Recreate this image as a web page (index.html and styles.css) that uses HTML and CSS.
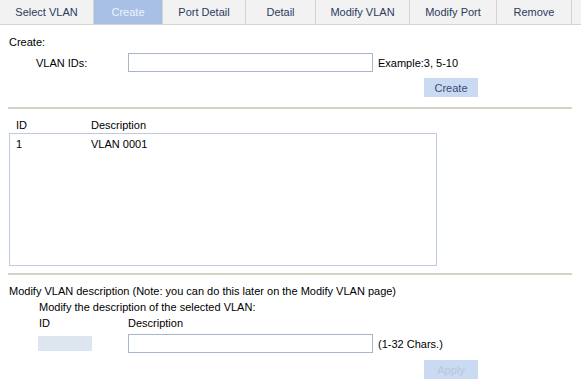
FILE: index.html
```html
<!DOCTYPE html>
<html lang="en">
<head>
    <meta charset="UTF-8">
    <title>VLAN Create</title>
    <link rel="stylesheet" href="styles.css">
</head>
<body>
    <div class="tabs">
        <div class="tab t1">Select VLAN</div>
        <div class="tab t2 active">Create</div>
        <div class="tab t3">Port Detail</div>
        <div class="tab t4">Detail</div>
        <div class="tab t5">Modify VLAN</div>
        <div class="tab t6">Modify Port</div>
        <div class="tab t7">Remove</div>
        <div class="tab t8"></div>
    </div>

    <div class="section create">
        <p class="title">Create:</p>
        <div class="row">
            <span class="label">VLAN IDs:</span>
            <input class="field" type="text">
            <span class="hint">Example:3, 5-10</span>
        </div>
        <div class="actions">
            <button class="btn">Create</button>
        </div>
    </div>

    <div class="rule"></div>

    <div class="section list">
        <div class="list-head">
            <span class="col-id">ID</span>
            <span class="col-desc">Description</span>
        </div>
        <div class="list-box">
            <div class="list-row">
                <span class="col-id">1</span>
                <span class="col-desc">VLAN 0001</span>
            </div>
        </div>
    </div>

    <div class="rule short"></div>

    <div class="section modify">
        <p class="title">Modify VLAN description (Note: you can do this later on the Modify VLAN page)</p>
        <p class="sub">Modify the description of the selected VLAN:</p>
        <div class="mod-head">
            <span class="mod-id">ID</span>
            <span>Description</span>
        </div>
        <div class="mod-row">
            <span class="id-box"></span>
            <input class="field" type="text">
            <span class="hint">(1-32 Chars.)</span>
        </div>
        <div class="actions apply">
            <button class="btn" disabled>Apply</button>
        </div>
    </div>
</body>
</html>
```

FILE: styles.css
```css
body {
    margin: 0;
    font-family: 'Liberation Sans', Arial, sans-serif;
    font-size: 11px;
    line-height: 14px;
    color: #000;
    background: #fff;
}

p {
    margin: 0;
}

.tabs {
    display: flex;
    height: 24px;
    border-bottom: 1px solid #d4d4d4;
    background: #f2f2f2;
}

.tab {
    display: flex;
    align-items: center;
    justify-content: center;
    border-right: 1px solid #d4d4d4;
    color: #2c3a60;
    box-sizing: border-box;
}

.t1 { width: 94px; }
.t2 { width: 69px; }
.t3 { width: 83px; }
.t4 { width: 70px; }
.t5 { width: 94px; }
.t6 { width: 87px; }
.t7 { width: 75px; }
.t8 { flex: 1; border-right: none; }

.tab.active {
    background: #a8c0e6;
    color: #eef3fb;
}

.create {
    padding: 10px 0 0 9px;
}

.row {
    display: flex;
    align-items: center;
    margin-top: 4px;
}

.label {
    width: 92px;
    padding-left: 27px;
}

.field {
    width: 245px;
    height: 19px;
    box-sizing: border-box;
    border: 1px solid #a7b6cb;
    margin: 0;
    padding: 1px 3px;
    font: inherit;
}

.hint {
    margin-left: 5px;
}

.actions {
    display: flex;
    justify-content: flex-end;
    width: 469px;
    margin-top: 6px;
}

.btn {
    width: 54px;
    height: 19px;
    border: none;
    background: #c9daf2;
    color: #3b4c72;
    font: inherit;
    padding: 0;
}

.btn:disabled {
    color: #b8c6d9;
}

.rule {
    height: 2px;
    margin: 10px 9px 0 8px;
    background: #d3d3c6;
}

.rule.short {
    margin-top: 7px;
}

.list {
    padding: 9px 0 0 9px;
}

.list-head {
    display: flex;
    height: 14px;
    align-items: center;
}

.col-id {
    width: 75px;
    padding-left: 7px;
}

.list-box {
    width: 428px;
    height: 133px;
    box-sizing: border-box;
    border: 1px solid #bccbe3;
    margin-top: 1px;
}

.list-row {
    display: flex;
    margin-top: 3px;
}

.list-row .col-id {
    padding-left: 6px;
}

.modify {
    padding: 9px 0 0 9px;
}

.sub {
    margin-top: 2px;
    padding-left: 30px;
}

.mod-head {
    display: flex;
    margin-top: 2px;
    padding-left: 30px;
}

.mod-id {
    width: 89px;
}

.mod-row {
    display: flex;
    align-items: center;
    margin-top: 4px;
    padding-left: 29px;
}

.id-box {
    width: 54px;
    height: 15px;
    margin-right: 36px;
    background: #dde5f1;
}

.apply {
    margin-top: 7px;
}
```
